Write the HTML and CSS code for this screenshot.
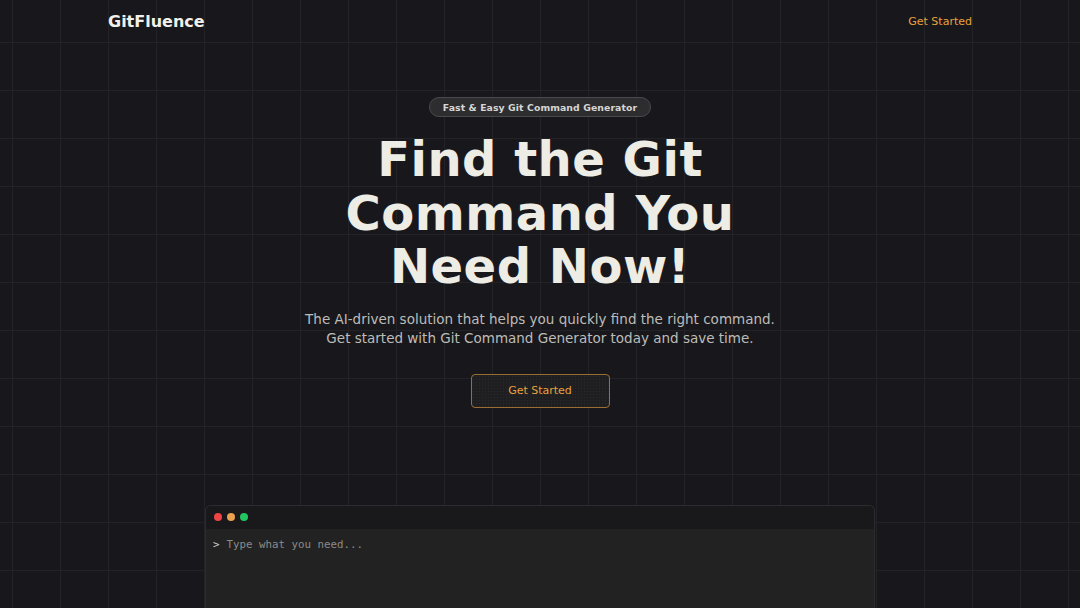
FILE: index.html
```html
<!DOCTYPE html>
<html lang="en">
<head>
<meta charset="utf-8">
<title>GitFluence</title>
<link rel="stylesheet" href="styles.css">
</head>
<body>
<div class="page">
  <header class="nav">
    <div class="brand">GitFluence</div>
    <a class="nav-link" href="#">Get Started</a>
  </header>
  <main class="hero">
    <div class="badge">Fast &amp; Easy Git Command Generator</div>
    <h1 class="title">Find the Git<br>Command You<br>Need Now!</h1>
    <p class="lead">The AI-driven solution that helps you quickly find the right command.<br>Get started with Git Command Generator today and save time.</p>
    <a class="cta" href="#">Get Started</a>
    <section class="terminal">
      <div class="term-bar">
        <span class="dot red"></span>
        <span class="dot amber"></span>
        <span class="dot green"></span>
      </div>
      <div class="term-body">
        <span class="prompt">&gt;</span>
        <span class="placeholder">Type what you need...</span>
      </div>
    </section>
  </main>
</div>
</body>
</html>
```

FILE: styles.css
```css
* { box-sizing: border-box; }
html, body { margin: 0; padding: 0; }
body {
  width: 1080px;
  height: 608px;
  overflow: hidden;
  background-color: #18181c;
  background-image:
    linear-gradient(to right, #222227 1px, transparent 1px),
    linear-gradient(to bottom, #222227 1px, transparent 1px);
  background-size: 48px 48px;
  background-position: 12px 42px;
  font-family: "DejaVu Sans", sans-serif;
  color: #ecebe4;
}
.page {
  width: 864px;
  margin: 0 auto;
}
.nav {
  height: 42px;
  padding-top: 1px;
  display: flex;
  align-items: center;
  justify-content: space-between;
}
.brand {
  font-weight: bold;
  font-size: 16px;
  color: #f1f0ea;
}
.nav-link {
  color: #e8a23c;
  font-size: 11px;
  text-decoration: none;
}
.hero {
  display: flex;
  flex-direction: column;
  align-items: center;
  padding-top: 55px;
}
.badge {
  height: 20px;
  padding: 0 13px;
  display: flex;
  align-items: center;
  border: 1px solid #4a4a4e;
  border-radius: 10px;
  background: #2d2d30;
  color: #d6d6d4;
  font-size: 9.3px;
  font-weight: bold;
  letter-spacing: 0.1px;
}
.title {
  margin: 16px 0 0;
  font-size: 48px;
  line-height: 53.5px;
  font-weight: bold;
  text-align: center;
  color: #edece5;
  letter-spacing: 0.5px;
}
.lead {
  margin: 16px 0 0;
  font-size: 13.5px;
  line-height: 19.5px;
  text-align: center;
  color: #bdbcb8;
}
.cta {
  margin-top: 25px;
  width: 139px;
  height: 34px;
  display: flex;
  align-items: center;
  justify-content: center;
  border: 1px solid #9a6d32;
  border-radius: 4px;
  background-color: #1f1f21;
  background-image: radial-gradient(#2a2a2c 0.6px, transparent 0.8px);
  background-size: 3px 3px;
  color: #e8a23c;
  font-size: 11px;
  text-decoration: none;
}
.terminal {
  margin-top: 97px;
  width: 670px;
  height: 120px;
  border: 1px solid #2c2c30;
  border-bottom: none;
  border-radius: 6px 6px 0 0;
  background: #222222;
  overflow: hidden;
}
.term-bar {
  height: 23px;
  background: #19191c;
  display: flex;
  align-items: center;
  gap: 5px;
  padding-left: 8px;
}
.dot {
  width: 8px;
  height: 8px;
  border-radius: 50%;
}
.red { background: #ef4444; }
.amber { background: #e8a24f; }
.green { background: #22c55e; }
.term-body {
  padding: 9px 7px;
  font-family: "DejaVu Sans Mono", monospace;
  font-size: 10.8px;
  display: flex;
  gap: 7px;
}
.prompt { color: #d0d0d0; }
.placeholder { color: #8a8a8a; }
```
